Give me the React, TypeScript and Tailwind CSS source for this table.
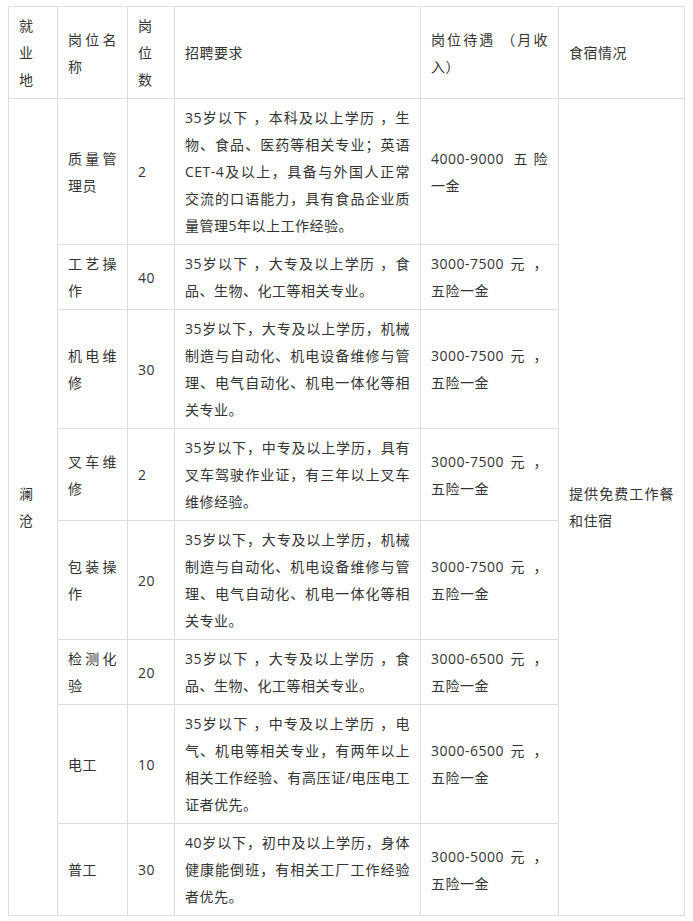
import React from "react";

type Row = {
  name: string[];
  n: string;
  req: string[];
  pay: string[];
};

const mech = [
  "35岁以下，大专及以上学历，机械",
  "制造与自动化、机电设备维修与管",
  "理、电气自动化、机电一体化等相",
  "关专业。",
];
const pay75 = ["3000-7500 元 ，", "五险一金"];
const pay65 = ["3000-6500 元 ，", "五险一金"];

const rows: Row[] = [
  {
    name: ["质量管", "理员"],
    n: "2",
    req: [
      "35岁以下 ，本科及以上学历 ，生",
      "物、食品、医药等相关专业；英语",
      "CET-4及以上，具备与外国人正常",
      "交流的口语能力，具有食品企业质",
      "量管理5年以上工作经验。",
    ],
    pay: ["4000-9000 五险", "一金"],
  },
  {
    name: ["工艺操", "作"],
    n: "40",
    req: ["35岁以下 ，大专及以上学历 ，食", "品、生物、化工等相关专业。"],
    pay: pay75,
  },
  { name: ["机电维", "修"], n: "30", req: mech, pay: pay75 },
  {
    name: ["叉车维", "修"],
    n: "2",
    req: [
      "35岁以下，中专及以上学历，具有",
      "叉车驾驶作业证，有三年以上叉车",
      "维修经验。",
    ],
    pay: pay75,
  },
  { name: ["包装操", "作"], n: "20", req: mech, pay: pay75 },
  {
    name: ["检测化", "验"],
    n: "20",
    req: ["35岁以下 ，大专及以上学历 ，食", "品、生物、化工等相关专业。"],
    pay: pay65,
  },
  {
    name: ["电工"],
    n: "10",
    req: [
      "35岁以下 ，中专及以上学历 ，电",
      "气、机电等相关专业，有两年以上",
      "相关工作经验、有高压证/电压电工",
      "证者优先。",
    ],
    pay: pay65,
  },
  {
    name: ["普工"],
    n: "30",
    req: [
      "40岁以下，初中及以上学历，身体",
      "健康能倒班，有相关工厂工作经验",
      "者优先。",
    ],
    pay: ["3000-5000 元 ，", "五险一金"],
  },
];

function Lines({ lines }: { lines: string[] }) {
  return (
    <>
      {lines.map((l, i) => (
        <div
          key={i}
          className={
            i < lines.length - 1
              ? "text-justify [text-align-last:justify]"
              : "text-left"
          }
        >
          {l}
        </div>
      ))}
    </>
  );
}

const td =
  "border border-[#dddddd] px-[10px] py-[5px] align-middle text-left font-normal";

export default function App() {
  return (
    <div className="min-h-[921px] w-[693px] bg-white pl-[8px] pt-[6px] font-[family-name:'Open_Sans','Noto_Sans_CJK_SC',sans-serif] text-[14px] leading-[27px] tracking-[0.5px] text-[#333333]">
      <table className="w-[676px] table-fixed border-collapse">
        <colgroup>
          <col className="w-[49px]" />
          <col className="w-[70px]" />
          <col className="w-[47px]" />
          <col className="w-[246px]" />
          <col className="w-[138px]" />
          <col className="w-[126px]" />
        </colgroup>
        <thead>
          <tr>
            <th className={td}>
              <Lines lines={["就", "业", "地"]} />
            </th>
            <th className={td}>
              <Lines lines={["岗位名", "称"]} />
            </th>
            <th className={td}>
              <Lines lines={["岗", "位", "数"]} />
            </th>
            <th className={td}>
              <Lines lines={["招聘要求"]} />
            </th>
            <th className={td}>
              <Lines lines={["岗位待遇 （月收", "入）"]} />
            </th>
            <th className={td}>
              <Lines lines={["食宿情况"]} />
            </th>
          </tr>
        </thead>
        <tbody>
          {rows.map((r, i) => (
            <tr key={i}>
              {i === 0 && (
                <td className={td} rowSpan={rows.length}>
                  <Lines lines={["澜", "沧"]} />
                </td>
              )}
              <td className={td}>
                <Lines lines={r.name} />
              </td>
              <td className={td}>
                <Lines lines={[r.n]} />
              </td>
              <td className={td}>
                <Lines lines={r.req} />
              </td>
              <td className={td}>
                <Lines lines={r.pay} />
              </td>
              {i === 0 && (
                <td className={td} rowSpan={rows.length}>
                  <Lines lines={["提供免费工作餐", "和住宿"]} />
                </td>
              )}
            </tr>
          ))}
        </tbody>
      </table>
    </div>
  );
}
